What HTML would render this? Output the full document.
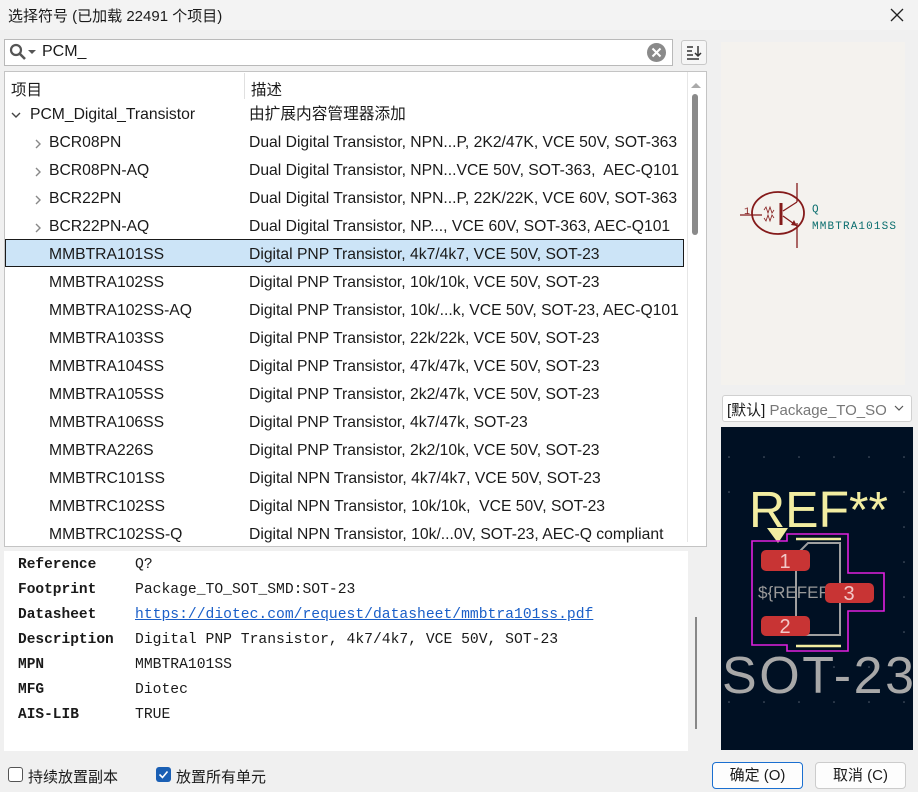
<!DOCTYPE html>
<html><head><meta charset="utf-8"><style>
*{margin:0;padding:0;box-sizing:border-box}
body{width:918px;height:792px;background:#f0f0f0;font-family:"Liberation Sans","Noto Sans CJK SC",sans-serif;font-size:15px;color:#1a1a1a;position:relative;overflow:hidden}
.abs{position:absolute}
.row{position:absolute;left:1px;width:682px;height:28px;line-height:28px;white-space:nowrap;font-size:15.7px}
.row .a{position:absolute;left:44px}
.row .b{position:absolute;left:244px}
.chev{position:absolute;left:28px;top:9px}
.det{position:absolute;left:18px;font-family:"Liberation Mono","Noto Serif CJK SC",monospace;font-size:14.7px;line-height:25px}
.det b{display:inline-block;width:117px;font-weight:bold;font-size:14.5px}
</style></head><body>
<div class="abs" style="left:0;top:0;width:918px;height:30px;background:#f3f3f3"></div>
<div class="abs" style="left:8px;top:5px;font-size:15px">选择符号 (已加载 22491 个项目)</div>
<svg class="abs" style="left:889px;top:7px" width="16" height="16"><path d="M2 2L14 14M14 2L2 14" stroke="#222" stroke-width="1.3"/></svg>

<div class="abs" style="left:4px;top:39px;width:669px;height:27px;background:#fff;border:1px solid #b9b9b9"></div>
<svg class="abs" style="left:9px;top:43px" width="30" height="18"><circle cx="7" cy="7" r="5" fill="none" stroke="#555" stroke-width="2.2"/><path d="M11 11L16 16" stroke="#555" stroke-width="2.6"/><path d="M19 7h8l-4 4z" fill="#555"/></svg>
<div class="abs" style="left:42px;top:43px;font-size:16px">PCM_</div>
<svg class="abs" style="left:646px;top:42px" width="21" height="21"><circle cx="10.5" cy="10.5" r="9.5" fill="#8a8a8a"/><path d="M6.5 6.5L14.5 14.5M14.5 6.5L6.5 14.5" stroke="#fff" stroke-width="2"/></svg>
<div class="abs" style="left:681px;top:40px;width:26px;height:25px;border:1px solid #c8c8c8;border-radius:3px;background:#f6f6f6"></div>
<svg class="abs" style="left:684px;top:43px" width="20" height="20"><path d="M3 4h6M3 8h5M3 12h6M3 16h12M14 3v10M11 10l3 3 3-3" stroke="#333" stroke-width="1.5" fill="none"/></svg>

<div class="abs" style="left:4px;top:71px;width:703px;height:476px;background:#fff;border:1px solid #c4c4c4"></div>
<div class="abs" style="left:11px;top:78px;font-size:15.5px">项目</div>
<div class="abs" style="left:244px;top:73px;width:1px;height:26px;background:#e0e0e0"></div>
<div class="abs" style="left:251px;top:78px;font-size:15.5px">描述</div>
<div class="abs" style="left:687px;top:72px;width:1px;height:470px;background:#e6e6e6"></div>
<svg class="abs" style="left:689px;top:80px" width="14" height="10"><path d="M2 8L7 3L12 8z" fill="#aaa"/></svg>
<div class="abs" style="left:692px;top:94px;width:6px;height:141px;background:#8a8a8a;border-radius:3px"></div>

<div class="abs" style="left:5px;top:239px;width:679px;height:28px;background:#cce4f7;border:1px solid #1a1a1a"></div>
<div id="rows" class="abs" style="left:4px;top:101px">
<div class="row" style="top:0"><svg class="chev" style="left:5px" width="12" height="10"><path d="M2 3l4 4 4-4" stroke="#444" stroke-width="1.4" fill="none"/></svg><span class="a" style="left:25px">PCM_Digital_Transistor</span><span class="b">由扩展内容管理器添加</span></div>
<div class="row" style="top:28px"><svg class="chev" width="10" height="12"><path d="M3 2l4 4-4 4" stroke="#888" stroke-width="1.4" fill="none"/></svg><span class="a">BCR08PN</span><span class="b">Dual Digital Transistor, NPN...P, 2K2/47K, VCE 50V, SOT-363</span></div>
<div class="row" style="top:56px"><svg class="chev" width="10" height="12"><path d="M3 2l4 4-4 4" stroke="#888" stroke-width="1.4" fill="none"/></svg><span class="a">BCR08PN-AQ</span><span class="b">Dual Digital Transistor, NPN...VCE 50V, SOT-363,&nbsp; AEC-Q101</span></div>
<div class="row" style="top:84px"><svg class="chev" width="10" height="12"><path d="M3 2l4 4-4 4" stroke="#888" stroke-width="1.4" fill="none"/></svg><span class="a">BCR22PN</span><span class="b">Dual Digital Transistor, NPN...P, 22K/22K, VCE 60V, SOT-363</span></div>
<div class="row" style="top:112px"><svg class="chev" width="10" height="12"><path d="M3 2l4 4-4 4" stroke="#888" stroke-width="1.4" fill="none"/></svg><span class="a">BCR22PN-AQ</span><span class="b">Dual Digital Transistor, NP..., VCE 60V, SOT-363, AEC-Q101</span></div>
<div class="row" style="top:140px"><span class="a">MMBTRA101SS</span><span class="b">Digital PNP Transistor, 4k7/4k7, VCE 50V, SOT-23</span></div>
<div class="row" style="top:168px"><span class="a">MMBTRA102SS</span><span class="b">Digital PNP Transistor, 10k/10k, VCE 50V, SOT-23</span></div>
<div class="row" style="top:196px"><span class="a">MMBTRA102SS-AQ</span><span class="b">Digital PNP Transistor, 10k/...k, VCE 50V, SOT-23, AEC-Q101</span></div>
<div class="row" style="top:224px"><span class="a">MMBTRA103SS</span><span class="b">Digital PNP Transistor, 22k/22k, VCE 50V, SOT-23</span></div>
<div class="row" style="top:252px"><span class="a">MMBTRA104SS</span><span class="b">Digital PNP Transistor, 47k/47k, VCE 50V, SOT-23</span></div>
<div class="row" style="top:280px"><span class="a">MMBTRA105SS</span><span class="b">Digital PNP Transistor, 2k2/47k, VCE 50V, SOT-23</span></div>
<div class="row" style="top:308px"><span class="a">MMBTRA106SS</span><span class="b">Digital PNP Transistor, 4k7/47k, SOT-23</span></div>
<div class="row" style="top:336px"><span class="a">MMBTRA226S</span><span class="b">Digital PNP Transistor, 2k2/10k, VCE 50V, SOT-23</span></div>
<div class="row" style="top:364px"><span class="a">MMBTRC101SS</span><span class="b">Digital NPN Transistor, 4k7/4k7, VCE 50V, SOT-23</span></div>
<div class="row" style="top:392px"><span class="a">MMBTRC102SS</span><span class="b">Digital NPN Transistor, 10k/10k,&nbsp; VCE 50V, SOT-23</span></div>
<div class="row" style="top:420px"><span class="a">MMBTRC102SS-Q</span><span class="b">Digital NPN Transistor, 10k/...0V, SOT-23, AEC-Q compliant</span></div>
</div>

<div class="abs" style="left:4px;top:551px;width:684px;height:200px;background:#fff"></div>
<div class="abs" style="left:695px;top:617px;width:2px;height:112px;background:#888"></div>
<div class="det" style="top:553px">
<div><b>Reference</b>Q?</div>
<div><b>Footprint</b>Package_TO_SOT_SMD:SOT-23</div>
<div><b>Datasheet</b><span style="color:#1a5fc8;text-decoration:underline">https://diotec.com/request/datasheet/mmbtra101ss.pdf</span></div>
<div><b>Description</b>Digital PNP Transistor, 4k7/4k7, VCE 50V, SOT-23</div>
<div><b>MPN</b>MMBTRA101SS</div>
<div><b>MFG</b>Diotec</div>
<div><b>AIS-LIB</b>TRUE</div>
</div>

<div class="abs" style="left:8px;top:767px;width:15px;height:15px;border:1px solid #555;border-radius:3px;background:#fff"></div>
<div class="abs" style="left:28px;top:766px">持续放置副本</div>
<div class="abs" style="left:156px;top:767px;width:15px;height:15px;border-radius:3px;background:#1a5fb4"></div>
<svg class="abs" style="left:156px;top:767px" width="15" height="15"><path d="M3.5 7.5l3 3 5-6" stroke="#fff" stroke-width="1.6" fill="none"/></svg>
<div class="abs" style="left:176px;top:766px">放置所有单元</div>
<div class="abs" style="left:712px;top:762px;width:91px;height:27px;border:1px solid #1a6fd0;border-radius:4px;background:#fdfdfd;text-align:center;line-height:25px">确定 (O)</div>
<div class="abs" style="left:815px;top:762px;width:91px;height:27px;border:1px solid #ccc;border-radius:4px;background:#fdfdfd;text-align:center;line-height:25px">取消 (C)</div>

<div class="abs" style="left:721px;top:42px;width:184px;height:343px;background:#f4f2ee"></div>
<svg class="abs" style="left:720px;top:170px" width="198" height="90">
<g stroke="#841a1a" fill="none" stroke-width="1.3">
<ellipse cx="58" cy="43" rx="26" ry="21" stroke-width="1.8"/>
<path d="M20 45H42M77 13V32M77 53V78M77 32L63 41M63 46L77 56"/>
<path d="M61 33V55" stroke-width="3"/>
<path d="M44 40l2-3 2 6 2-6 2 6 2-3M44 48l2 3 2-6 2 6 2-6 2 3" stroke-width="0.8"/>
</g>
<path d="M77 56l-6-1 3-5z" fill="#841a1a"/>
<text x="24" y="44" font-size="10" fill="#841a1a" font-family="Liberation Mono">1</text>
<text x="92" y="42" font-size="11" fill="#0a6e6e" font-family="Liberation Mono">Q</text>
<text x="92" y="59" font-size="11" fill="#0a6e6e" font-family="Liberation Mono" textLength="84">MMBTRA101SS</text>
</svg>

<div class="abs" style="left:722px;top:395px;width:190px;height:27px;background:#fff;border:1px solid #d0d0d0;border-radius:3px"></div>
<div class="abs" style="left:727px;top:399px;font-size:15px;white-space:nowrap;width:160px;overflow:hidden">[默认] <span style="color:#777">Package_TO_SO</span></div>
<svg class="abs" style="left:893px;top:403px" width="12" height="10"><path d="M2 3l4 4 4-4" stroke="#555" fill="none" stroke-width="1.2"/></svg>

<svg class="abs" style="left:721px;top:427px" width="192" height="323">
<rect width="192" height="323" fill="#001023"/>
<g fill="#556070">
<circle cx="8" cy="30" r=".8"/><circle cx="43" cy="30" r=".8"/><circle cx="78" cy="30" r=".8"/><circle cx="113" cy="30" r=".8"/><circle cx="148" cy="30" r=".8"/><circle cx="183" cy="30" r=".8"/>
<circle cx="8" cy="65" r=".8"/><circle cx="183" cy="65" r=".8"/><circle cx="183" cy="100" r=".8"/><circle cx="183" cy="135" r=".8"/><circle cx="183" cy="170" r=".8"/><circle cx="183" cy="205" r=".8"/>
<circle cx="8" cy="275" r=".8"/><circle cx="43" cy="275" r=".8"/><circle cx="78" cy="275" r=".8"/><circle cx="113" cy="275" r=".8"/><circle cx="148" cy="275" r=".8"/><circle cx="183" cy="275" r=".8"/>
<circle cx="8" cy="240" r=".8"/><circle cx="43" cy="240" r=".8"/><circle cx="113" cy="240" r=".8"/><circle cx="148" cy="240" r=".8"/>
</g>
<text x="28" y="100" font-size="51" fill="#f2eda1" font-family="Liberation Sans" textLength="139" lengthAdjust="spacingAndGlyphs">REF**</text>
<path d="M46 101h21l-10 15z" fill="#f2eda1"/>
<path d="M31 114H66V107H127V146H163V184H127V224H66V218H31Z" fill="none" stroke="#e020e0" stroke-width="1.6"/>
<path d="M75 128L87 116H119V208H75Z" fill="none" stroke="#a0a0a0" stroke-width="2"/>
<path d="M75 112H120M75 219H120" stroke="#f2eda1" stroke-width="2.5"/>
<text x="37" y="171" font-size="17" fill="#9a9a9a" font-family="Liberation Sans">${REFER</text>
<rect x="40" y="123" width="49" height="21" rx="5" fill="#c83434"/>
<rect x="40" y="189" width="49" height="20" rx="5" fill="#c83434"/>
<rect x="104" y="156" width="49" height="20" rx="5" fill="#c83434"/>
<g font-family="Liberation Sans" font-size="20" fill="#f2c8c8" text-anchor="middle">
<text x="64" y="141">1</text><text x="64" y="206">2</text><text x="128" y="173">3</text></g>
<text x="1" y="266" font-size="52" fill="#a8a8a8" font-family="Liberation Sans" textLength="192" lengthAdjust="spacing">SOT-23</text>
</svg>
</body></html>
